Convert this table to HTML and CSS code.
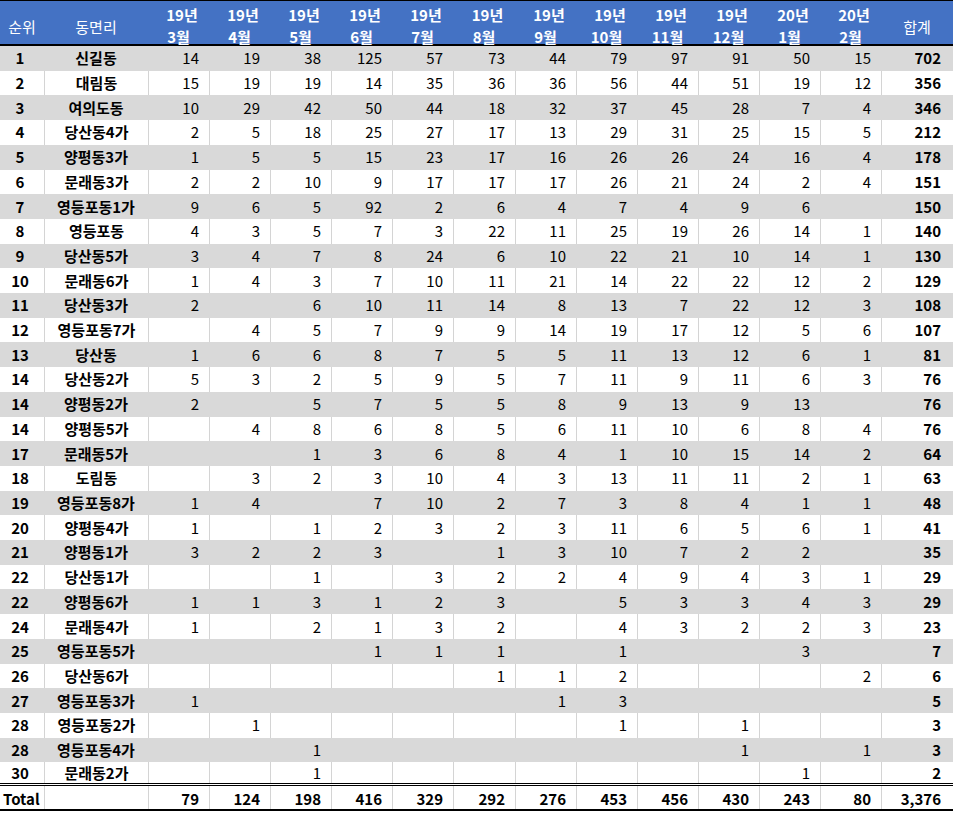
FILE: index.html
```html
<!DOCTYPE html>
<html lang="ko">
<head>
<meta charset="utf-8">
<title>동면리별 월간 집계</title>
<link rel="stylesheet" href="styles.css">
</head>
<body>
<table class="sheet">
<thead>
<tr class="head">
<th class="h-plain">순위</th><th class="h-plain">동면리</th>
<th class="h-mon"><span class="y">19년</span><span>3월</span></th>
<th class="h-mon"><span class="y">19년</span><span>4월</span></th>
<th class="h-mon"><span class="y">19년</span><span>5월</span></th>
<th class="h-mon"><span class="y">19년</span><span>6월</span></th>
<th class="h-mon"><span class="y">19년</span><span>7월</span></th>
<th class="h-mon"><span class="y">19년</span><span>8월</span></th>
<th class="h-mon"><span class="y">19년</span><span>9월</span></th>
<th class="h-mon"><span class="y">19년</span><span>10월</span></th>
<th class="h-mon"><span class="y">19년</span><span>11월</span></th>
<th class="h-mon"><span class="y">19년</span><span>12월</span></th>
<th class="h-mon"><span class="y">20년</span><span>1월</span></th>
<th class="h-mon"><span class="y">20년</span><span>2월</span></th>
<th class="h-plain">합계</th>
</tr>
</thead>
<tbody>
<tr class="g"><td class="rank">1</td><td class="name">신길동</td><td class="num">14</td><td class="num">19</td><td class="num">38</td><td class="num">125</td><td class="num">57</td><td class="num">73</td><td class="num">44</td><td class="num">79</td><td class="num">97</td><td class="num">91</td><td class="num">50</td><td class="num">15</td><td class="sum">702</td></tr>
<tr class="w"><td class="rank">2</td><td class="name">대림동</td><td class="num">15</td><td class="num">19</td><td class="num">19</td><td class="num">14</td><td class="num">35</td><td class="num">36</td><td class="num">36</td><td class="num">56</td><td class="num">44</td><td class="num">51</td><td class="num">19</td><td class="num">12</td><td class="sum">356</td></tr>
<tr class="g"><td class="rank">3</td><td class="name">여의도동</td><td class="num">10</td><td class="num">29</td><td class="num">42</td><td class="num">50</td><td class="num">44</td><td class="num">18</td><td class="num">32</td><td class="num">37</td><td class="num">45</td><td class="num">28</td><td class="num">7</td><td class="num">4</td><td class="sum">346</td></tr>
<tr class="w"><td class="rank">4</td><td class="name">당산동4가</td><td class="num">2</td><td class="num">5</td><td class="num">18</td><td class="num">25</td><td class="num">27</td><td class="num">17</td><td class="num">13</td><td class="num">29</td><td class="num">31</td><td class="num">25</td><td class="num">15</td><td class="num">5</td><td class="sum">212</td></tr>
<tr class="g"><td class="rank">5</td><td class="name">양평동3가</td><td class="num">1</td><td class="num">5</td><td class="num">5</td><td class="num">15</td><td class="num">23</td><td class="num">17</td><td class="num">16</td><td class="num">26</td><td class="num">26</td><td class="num">24</td><td class="num">16</td><td class="num">4</td><td class="sum">178</td></tr>
<tr class="w"><td class="rank">6</td><td class="name">문래동3가</td><td class="num">2</td><td class="num">2</td><td class="num">10</td><td class="num">9</td><td class="num">17</td><td class="num">17</td><td class="num">17</td><td class="num">26</td><td class="num">21</td><td class="num">24</td><td class="num">2</td><td class="num">4</td><td class="sum">151</td></tr>
<tr class="g"><td class="rank">7</td><td class="name">영등포동1가</td><td class="num">9</td><td class="num">6</td><td class="num">5</td><td class="num">92</td><td class="num">2</td><td class="num">6</td><td class="num">4</td><td class="num">7</td><td class="num">4</td><td class="num">9</td><td class="num">6</td><td class="num"></td><td class="sum">150</td></tr>
<tr class="w"><td class="rank">8</td><td class="name">영등포동</td><td class="num">4</td><td class="num">3</td><td class="num">5</td><td class="num">7</td><td class="num">3</td><td class="num">22</td><td class="num">11</td><td class="num">25</td><td class="num">19</td><td class="num">26</td><td class="num">14</td><td class="num">1</td><td class="sum">140</td></tr>
<tr class="g"><td class="rank">9</td><td class="name">당산동5가</td><td class="num">3</td><td class="num">4</td><td class="num">7</td><td class="num">8</td><td class="num">24</td><td class="num">6</td><td class="num">10</td><td class="num">22</td><td class="num">21</td><td class="num">10</td><td class="num">14</td><td class="num">1</td><td class="sum">130</td></tr>
<tr class="w"><td class="rank">10</td><td class="name">문래동6가</td><td class="num">1</td><td class="num">4</td><td class="num">3</td><td class="num">7</td><td class="num">10</td><td class="num">11</td><td class="num">21</td><td class="num">14</td><td class="num">22</td><td class="num">22</td><td class="num">12</td><td class="num">2</td><td class="sum">129</td></tr>
<tr class="g"><td class="rank">11</td><td class="name">당산동3가</td><td class="num">2</td><td class="num"></td><td class="num">6</td><td class="num">10</td><td class="num">11</td><td class="num">14</td><td class="num">8</td><td class="num">13</td><td class="num">7</td><td class="num">22</td><td class="num">12</td><td class="num">3</td><td class="sum">108</td></tr>
<tr class="w"><td class="rank">12</td><td class="name">영등포동7가</td><td class="num"></td><td class="num">4</td><td class="num">5</td><td class="num">7</td><td class="num">9</td><td class="num">9</td><td class="num">14</td><td class="num">19</td><td class="num">17</td><td class="num">12</td><td class="num">5</td><td class="num">6</td><td class="sum">107</td></tr>
<tr class="g"><td class="rank">13</td><td class="name">당산동</td><td class="num">1</td><td class="num">6</td><td class="num">6</td><td class="num">8</td><td class="num">7</td><td class="num">5</td><td class="num">5</td><td class="num">11</td><td class="num">13</td><td class="num">12</td><td class="num">6</td><td class="num">1</td><td class="sum">81</td></tr>
<tr class="w"><td class="rank">14</td><td class="name">당산동2가</td><td class="num">5</td><td class="num">3</td><td class="num">2</td><td class="num">5</td><td class="num">9</td><td class="num">5</td><td class="num">7</td><td class="num">11</td><td class="num">9</td><td class="num">11</td><td class="num">6</td><td class="num">3</td><td class="sum">76</td></tr>
<tr class="g"><td class="rank">14</td><td class="name">양평동2가</td><td class="num">2</td><td class="num"></td><td class="num">5</td><td class="num">7</td><td class="num">5</td><td class="num">5</td><td class="num">8</td><td class="num">9</td><td class="num">13</td><td class="num">9</td><td class="num">13</td><td class="num"></td><td class="sum">76</td></tr>
<tr class="w"><td class="rank">14</td><td class="name">양평동5가</td><td class="num"></td><td class="num">4</td><td class="num">8</td><td class="num">6</td><td class="num">8</td><td class="num">5</td><td class="num">6</td><td class="num">11</td><td class="num">10</td><td class="num">6</td><td class="num">8</td><td class="num">4</td><td class="sum">76</td></tr>
<tr class="g"><td class="rank">17</td><td class="name">문래동5가</td><td class="num"></td><td class="num"></td><td class="num">1</td><td class="num">3</td><td class="num">6</td><td class="num">8</td><td class="num">4</td><td class="num">1</td><td class="num">10</td><td class="num">15</td><td class="num">14</td><td class="num">2</td><td class="sum">64</td></tr>
<tr class="w"><td class="rank">18</td><td class="name">도림동</td><td class="num"></td><td class="num">3</td><td class="num">2</td><td class="num">3</td><td class="num">10</td><td class="num">4</td><td class="num">3</td><td class="num">13</td><td class="num">11</td><td class="num">11</td><td class="num">2</td><td class="num">1</td><td class="sum">63</td></tr>
<tr class="g"><td class="rank">19</td><td class="name">영등포동8가</td><td class="num">1</td><td class="num">4</td><td class="num"></td><td class="num">7</td><td class="num">10</td><td class="num">2</td><td class="num">7</td><td class="num">3</td><td class="num">8</td><td class="num">4</td><td class="num">1</td><td class="num">1</td><td class="sum">48</td></tr>
<tr class="w"><td class="rank">20</td><td class="name">양평동4가</td><td class="num">1</td><td class="num"></td><td class="num">1</td><td class="num">2</td><td class="num">3</td><td class="num">2</td><td class="num">3</td><td class="num">11</td><td class="num">6</td><td class="num">5</td><td class="num">6</td><td class="num">1</td><td class="sum">41</td></tr>
<tr class="g"><td class="rank">21</td><td class="name">양평동1가</td><td class="num">3</td><td class="num">2</td><td class="num">2</td><td class="num">3</td><td class="num"></td><td class="num">1</td><td class="num">3</td><td class="num">10</td><td class="num">7</td><td class="num">2</td><td class="num">2</td><td class="num"></td><td class="sum">35</td></tr>
<tr class="w"><td class="rank">22</td><td class="name">당산동1가</td><td class="num"></td><td class="num"></td><td class="num">1</td><td class="num"></td><td class="num">3</td><td class="num">2</td><td class="num">2</td><td class="num">4</td><td class="num">9</td><td class="num">4</td><td class="num">3</td><td class="num">1</td><td class="sum">29</td></tr>
<tr class="g"><td class="rank">22</td><td class="name">양평동6가</td><td class="num">1</td><td class="num">1</td><td class="num">3</td><td class="num">1</td><td class="num">2</td><td class="num">3</td><td class="num"></td><td class="num">5</td><td class="num">3</td><td class="num">3</td><td class="num">4</td><td class="num">3</td><td class="sum">29</td></tr>
<tr class="w"><td class="rank">24</td><td class="name">문래동4가</td><td class="num">1</td><td class="num"></td><td class="num">2</td><td class="num">1</td><td class="num">3</td><td class="num">2</td><td class="num"></td><td class="num">4</td><td class="num">3</td><td class="num">2</td><td class="num">2</td><td class="num">3</td><td class="sum">23</td></tr>
<tr class="g"><td class="rank">25</td><td class="name">영등포동5가</td><td class="num"></td><td class="num"></td><td class="num"></td><td class="num">1</td><td class="num">1</td><td class="num">1</td><td class="num"></td><td class="num">1</td><td class="num"></td><td class="num"></td><td class="num">3</td><td class="num"></td><td class="sum">7</td></tr>
<tr class="w"><td class="rank">26</td><td class="name">당산동6가</td><td class="num"></td><td class="num"></td><td class="num"></td><td class="num"></td><td class="num"></td><td class="num">1</td><td class="num">1</td><td class="num">2</td><td class="num"></td><td class="num"></td><td class="num"></td><td class="num">2</td><td class="sum">6</td></tr>
<tr class="g"><td class="rank">27</td><td class="name">영등포동3가</td><td class="num">1</td><td class="num"></td><td class="num"></td><td class="num"></td><td class="num"></td><td class="num"></td><td class="num">1</td><td class="num">3</td><td class="num"></td><td class="num"></td><td class="num"></td><td class="num"></td><td class="sum">5</td></tr>
<tr class="w"><td class="rank">28</td><td class="name">영등포동2가</td><td class="num"></td><td class="num">1</td><td class="num"></td><td class="num"></td><td class="num"></td><td class="num"></td><td class="num"></td><td class="num">1</td><td class="num"></td><td class="num">1</td><td class="num"></td><td class="num"></td><td class="sum">3</td></tr>
<tr class="g"><td class="rank">28</td><td class="name">영등포동4가</td><td class="num"></td><td class="num"></td><td class="num">1</td><td class="num"></td><td class="num"></td><td class="num"></td><td class="num"></td><td class="num"></td><td class="num"></td><td class="num">1</td><td class="num"></td><td class="num">1</td><td class="sum">3</td></tr>
<tr class="w last"><td class="rank">30</td><td class="name">문래동2가</td><td class="num"></td><td class="num"></td><td class="num">1</td><td class="num"></td><td class="num"></td><td class="num"></td><td class="num"></td><td class="num"></td><td class="num"></td><td class="num"></td><td class="num">1</td><td class="num"></td><td class="sum">2</td></tr>
</tbody>
<tfoot>
<tr class="w total"><td class="label">Total</td><td class="name"></td><td class="num">79</td><td class="num">124</td><td class="num">198</td><td class="num">416</td><td class="num">329</td><td class="num">292</td><td class="num">276</td><td class="num">453</td><td class="num">456</td><td class="num">430</td><td class="num">243</td><td class="num">80</td><td class="sum">3,376</td></tr>
</tfoot>
</table>
</body>
</html>
```

FILE: styles.css
```css
html, body {
  margin: 0;
  padding: 0;
  background: #ffffff;
}

body {
  font-family: "Noto Sans CJK KR", "Noto Sans", sans-serif;
  font-size: 15px;
  color: #000000;
}

.sheet {
  display: block;
  width: 953px;
  border-collapse: separate;
  border-spacing: 0;
}

.sheet thead,
.sheet tbody,
.sheet tfoot {
  display: block;
}

.sheet tr {
  display: grid;
  grid-template-columns: 44px 104px repeat(5, 61px) 62px repeat(6, 61px) 72px;
  box-sizing: border-box;
  height: 24.71px;
}

.sheet th,
.sheet td {
  display: flex;
  align-items: center;
  box-sizing: border-box;
  padding: 0;
  white-space: nowrap;
  line-height: 20px;
  font-weight: normal;
}

/* header */
.head {
  height: 46px !important;
  background: #4472c4;
  border-top: 1px solid #000000;
  border-bottom: 2px solid #000000;
}

.head th {
  color: #ffffff;
  justify-content: center;
}

.h-plain {
  padding-top: 5px !important;
}

.h-mon {
  flex-direction: column;
  font-weight: bold !important;
  line-height: 22px !important;
  padding-top: 3px !important;
}

.h-mon .y {
  padding-left: 7px;
}

/* body rows */
.g {
  background: #d9d9d9;
}

.w {
  background: #ffffff;
}

.w td + td {
  border-left: 1px solid #d4d4d4;
}

.rank {
  justify-content: center;
  padding-right: 4px !important;
  font-weight: bold !important;
}

.name {
  justify-content: center;
  font-weight: bold !important;
}

.num {
  justify-content: flex-end;
  padding-right: 10px !important;
}

.sum {
  justify-content: flex-end;
  padding-right: 12px !important;
  font-weight: bold !important;
}

.last {
  height: 23.7px !important;
  border-bottom: 3px double #000000;
}

.total {
  height: 25px !important;
  border-bottom: 2px solid #000000;
}

.total td {
  font-weight: bold !important;
  padding-top: 2px !important;
}

.label {
  justify-content: flex-start;
  padding-left: 3px !important;
}
```
